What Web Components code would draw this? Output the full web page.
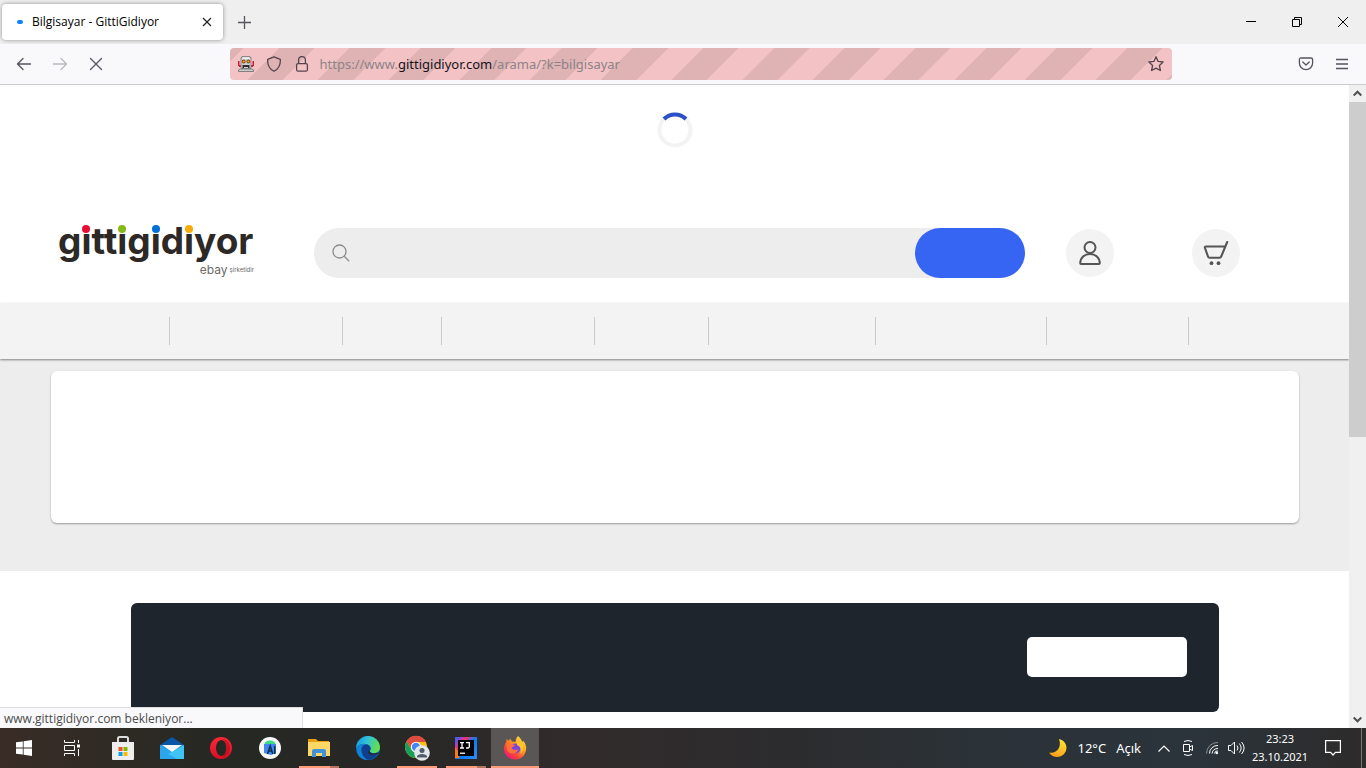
<!DOCTYPE html>
<html lang="tr">
<head>
<meta charset="utf-8">
<title>Bilgisayar - GittiGidiyor</title>
<style>
html, body { margin: 0; height: 100%; }
body { font: 12px/16px "Open Sans", "Noto Sans", sans-serif; overflow: hidden; background: #fff; }
</style>
</head>
<body>
<desktop-screen></desktop-screen>

<script>
const define = (name, html) => {
  const template = document.createElement('template');
  template.innerHTML = `<style>*{box-sizing:border-box}button{border:0;padding:0;margin:0;background:none;color:inherit;font:inherit;display:flex;align-items:center;justify-content:center}svg{display:block;flex:none}</style>` + html;
  customElements.define(name, class extends HTMLElement {
    constructor() {
      super();
      this.attachShadow({ mode: 'open' }).append(template.content.cloneNode(true));
    }
  });
};

define('desktop-screen', `
<style>
:host { display: flex; flex-direction: column; height: 100vh; }
page-viewport { flex: 1; min-height: 0; }
</style>
<tab-strip></tab-strip>
<nav-toolbar></nav-toolbar>
<page-viewport>
  <shop-header></shop-header>
  <category-bar></category-bar>
  <result-panel></result-panel>
  <promo-banner></promo-banner>
</page-viewport>
<task-bar></task-bar>
`);

define('tab-strip', `
<style>
:host { display: flex; height: 44px; background: #efefef; color: #15141a; }
.tab { display: flex; align-items: center; width: 221px; margin: 4px 0 4px 2px; padding: 0 4px 0 14px; background: #fff; border-radius: 4px; box-shadow: 0 0 4px rgba(0,0,0,.4); }
.tab span { flex: 1; margin-left: 8px; white-space: nowrap; font: 12px/16px "Open Sans", sans-serif; color: #000; }
.tab button { width: 24px; height: 24px; }
.new { width: 42px; }
.window { margin-left: auto; display: flex; }
.window button { width: 46px; }
</style>
<div class="tab">
  <svg width="8" height="6" viewBox="0 0 8 6"><rect x="1" y="1" width="6" height="4" rx="2" fill="#0a84ff"/></svg>
  <span>Bilgisayar - GittiGidiyor</span>
  <button aria-label="Sekmeyi kapat"><svg width="10" height="10" fill="none" stroke="#222"><path d="M1 1l8 8M9 1L1 9" stroke-width="1.2"/></svg></button>
</div>
<button class="new" aria-label="Yeni sekme"><svg width="13" height="13" stroke="#55535e"><path d="M6.5 0v13M0 6.5h13" stroke-width="1.3"/></svg></button>
<div class="window">
  <button aria-label="Simge durumuna küçült"><svg width="10" height="10" stroke="#000"><path d="M0 4.500h10"/></svg></button>
  <button aria-label="Önceki boyut"><svg width="10" height="10" fill="none" stroke="#000"><path d="M.5 2.5h7v7h-7zM2.5 2.500v-2h7v7h-2"/></svg></button>
  <button aria-label="Kapat"><svg width="10" height="10" stroke="#000"><path d="M0 0l10 10M10 0L0 10"/></svg></button>
</div>
`);

define('nav-toolbar', `
<style>
:host { display: flex; align-items: center; height: 41px; padding: 0 6px; background: #f9f9fb; border-bottom: 1px solid #ccc; color: #55535e; }
button { width: 36px; height: 32px; }
.side { flex: 1 1 0; display: flex; }
.side.end { justify-content: flex-end; flex-grow: .84; }
.address { flex: 4.2 1 0; display: flex; align-items: center; height: 32px; padding: 0 2px; border-radius: 4px;
  background: repeating-linear-gradient(-45deg, #dfb2b4 0 4px, #f3c2c5 4px 29px, #dfb2b4 29px 50px); }
.address button { width: 28px; }
.url { flex: 1; margin-left: 4px; outline: 0; white-space: nowrap; font: 13px/20px "Noto Sans", sans-serif; color: #8d8386; }
.url b { font-weight: 400; color: #15141a; }
</style>
<div class="side">
  <button aria-label="Geri"><svg width="16" height="16" fill="none" stroke="#55535e" stroke-width="1.3" stroke-linecap="round" stroke-linejoin="round"><path d="M14.500 8H1.500M7 2.500L1.500 8 7 13.500"/></svg></button>
  <button aria-label="İleri"><svg width="16" height="16" fill="none" stroke="#b9b8bd" stroke-width="1.3" stroke-linecap="round" stroke-linejoin="round"><path d="M1.500 8h13M9 2.500L14.500 8 9 13.500"/></svg></button>
  <button aria-label="Durdur"><svg width="16" height="16" fill="none" stroke="#55535e" stroke-width="1.3" stroke-linecap="round"><path d="M2.500 2.500l11 11M13.500 2.500l-11 11"/></svg></button>
</div>
<div class="address">
  <button aria-label="Uzaktan denetim"><svg width="16" height="16"><path d="M0 5h1v4h2v2H1V9H0zM16 5h-1v4h-2v2h2V9h1z" fill="#d01e38"/><path d="M0 5h1.500v5H0zM14.500 5H16v5h-1.500z" fill="#d01e38"/><path d="M4 .5h8v1h1v11H3v-11h1z" fill="#cfcfcf" stroke="#777" stroke-width=".8"/><path d="M4.500 1.500h7v1.500h-7z" fill="#f2f2f2"/><circle cx="5.700" cy="5.500" r="1.900" fill="#7a4a20"/><circle cx="10.300" cy="5.500" r="1.900" fill="#7a4a20"/><circle cx="5.700" cy="5.500" r="1.100" fill="#ff9d1e"/><circle cx="10.300" cy="5.500" r="1.100" fill="#ff9d1e"/><path d="M4.500 9h7v3h-1.500v-1h-4v1H4.500z" fill="#2e2e2e"/><path d="M.5 15.500v-1.500l2-1h11l2 1v1.500z" fill="#ccc" stroke="#6b6b6b" stroke-width=".8"/></svg></button>
  <button aria-label="İzlenme koruması"><svg width="16" height="16" fill="none" stroke="#55444c" stroke-width="1.3" stroke-linejoin="round"><path d="M8 .8L14.300 3.300c.4 5.200-1.600 9.500-6.300 12C3.300 12.800 1.300 8.500 1.700 3.300z"/></svg></button>
  <button aria-label="Site bilgisi"><svg width="16" height="16" fill="none" stroke="#55444c" stroke-width="1.3"><rect x="2.600" y="7.600" width="10.800" height="7.600" rx="1.500"/><path d="M4.600 7.500V4a3.400 3.400 0 0 1 6.800 0v3.500"/></svg></button>
  <div class="url" role="textbox" contenteditable="true" spellcheck="false" aria-label="Adres">https://www.<b>gittigidiyor.com</b>/arama/?k=bilgisayar</div>
  <button aria-label="Yer imi"><svg width="16" height="16" fill="none" stroke="#55444c" stroke-width="1.3" stroke-linejoin="round"><path d="M8 .8l2.100 4.600 5 .6-3.700 3.500 1 5L8 12.100l-4.400 2.400 1-5L.9 6l5-.6z"/></svg></button>
</div>
<div class="side end">
  <button aria-label="Pocket"><svg width="16" height="16" fill="none" stroke="#55535e" stroke-width="1.300" stroke-linecap="round" stroke-linejoin="round"><path d="M3 2h10q1.600 0 1.600 1.600V7a6.600 6.600 0 0 1-13.200 0V3.600Q1.400 2 3 2z"/><path d="M4.800 6L8 9l3.200-3"/></svg></button>
  <button aria-label="Menü"><svg width="14" height="12" stroke="#55535e" stroke-width="1.3"><path d="M1 1.500h12M1 6h12M1 10.500h12"/></svg></button>
</div>
`);

define('page-viewport', `
<style>
:host { display: flex; position: relative; background: #fff; }
.page { flex: 1; min-width: 0; overflow: hidden; }
.bar { width: 17px; display: flex; flex-direction: column; background: #f0f0f0; }
.bar button { height: 17px; }
.track { flex: 1; }
.thumb { height: 55%; background: #cdcdcd; }
.status { position: absolute; left: 0; bottom: 0; width: 303px; height: 21px; padding: 2px 4px; background: #f9f9fb; border: 1px solid #ddd; border-width: 1px 1px 0 0; color: #4c4c4c; font: 12px/18px "Open Sans", sans-serif; white-space: nowrap; }
</style>
<div class="page"><slot></slot></div>
<div class="bar">
  <button aria-label="Yukarı"><svg width="9" height="7" fill="none" stroke="#505050" stroke-width="2"><path d="M.7 5.500L4.500 1.700l3.800 3.800"/></svg></button>
  <div class="track"><div class="thumb"></div></div>
  <button aria-label="Aşağı"><svg width="9" height="7" fill="none" stroke="#505050" stroke-width="2"><path d="M.7 1.500l3.800 3.800 3.800-3.800"/></svg></button>
</div>
<div class="status" role="status">www.gittigidiyor.com bekleniyor...</div>
`);

define('shop-header', `
<style>
:host { display: block; padding-top: 27px; }
.spinner { display: block; margin: 0 auto; }
.row { display: flex; align-items: center; height: 50px; margin: 80px 109px 25px 58px; }
.search { flex: 1; display: flex; align-items: center; height: 50px; margin: 0 41px 0 60px; padding-left: 18px; border-radius: 25px; background: #ededed; }
.search input { flex: 1; min-width: 0; height: 100%; margin-left: 8px; padding: 0; border: 0; outline: 0; background: none; font: inherit; }
.search button { width: 110px; height: 50px; border-radius: 25px; background: #3665f3; }
.round { width: 48px; height: 48px; border-radius: 50%; background: #f3f3f3; }
.cart { margin-left: 78px; }
</style>
<svg class="spinner" width="36" height="36" fill="none" stroke-width="4"><circle cx="18" cy="18" r="15.500" stroke="#f3f3f3"/><path d="M7 7a15.500 15.500 0 0 1 22 0" stroke="#2b50c8"/></svg>
<div class="row">
  <brand-logo></brand-logo>
  <form class="search" onsubmit="return false">
    <svg width="18" height="18" fill="none" stroke="#8b8b8b" stroke-width="1.300"><circle cx="7.500" cy="7.500" r="6.500"/><path d="M12.200 12.200l5 5"/></svg>
    <input type="text" aria-label="Ara">
    <button aria-label="Bul"></button>
  </form>
  <button class="round" aria-label="Hesabım"><svg width="24" height="26" fill="none" stroke="#555" stroke-width="2" stroke-linejoin="round"><circle cx="12" cy="7.500" r="5.500"/><path d="M3 24c-.6 0-.8-.4-.8-1C2.400 17.500 6.500 14 12 14s9.600 3.500 9.800 9c0 .6-.2 1-.8 1z"/></svg></button>
  <button class="round cart" aria-label="Sepetim"><svg width="26" height="26" fill="none" stroke="#555" stroke-width="2.100" stroke-linecap="round" stroke-linejoin="round"><path d="M22 6.500H3c-1 0-1.300.6-1 1.500l3 8.500c.3.900.6 1.200 1.500 1.200h10.200c.9 0 1.200-.3 1.500-1.200L24.200 2"/><circle cx="8.500" cy="23.200" r="1.900" fill="#555" stroke="none"/><circle cx="15.500" cy="23.200" r="1.900" fill="#555" stroke="none"/></svg></button>
</div>
`);

define('brand-logo', `
<style>
:host { display: block; width: 196px; color: #2d2926; }
a { display: block; padding-bottom: 4px; color: inherit; text-decoration: none; white-space: nowrap; }
.name { font: 700 37px/28px "Inter", sans-serif; }
i { position: relative; font-style: normal; }
i::before { content: ""; position: absolute; left: 50%; top: 7px; width: 8px; height: 8px; margin-left: -4px; border-radius: 50%; background: var(--dot); }
.by { display: flex; justify-content: flex-end; align-items: center; gap: 2px; margin-top: 9px; color: #6c6967; font: 6px/12px "Inter", sans-serif; }
.by span:first-child { font-size: 12px; }
</style>
<a href="#" aria-label="gittigidiyor">
  <div class="name">g<i style="--dot:#e60f35">i</i>tt<i style="--dot:#86b817">i</i>g<i style="--dot:#0070d8">i</i>d<i style="--dot:#f9ab0b">i</i>yor</div>
  <div class="by"><span>ebay</span><span>şirketidir</span></div>
</a>
`);

define('category-bar', `
<style>
:host { display: block; position: relative; background: #f3f3f3; box-shadow: 0 1px 2px rgba(0,0,0,.45); }
nav { display: flex; align-items: center; height: 56px; }
span { flex: var(--w) 1 0; height: 28px; }
span:not(:last-child) { border-right: 1px solid #c9c9c9; }
</style>
<nav aria-label="Kategoriler">
  <span style="--w:170"></span><span style="--w:173"></span><span style="--w:99"></span><span style="--w:153"></span><span style="--w:113"></span><span style="--w:167"></span><span style="--w:171"></span><span style="--w:142"></span><span style="--w:161"></span>
</nav>
`);

define('result-panel', `
<style>
:host { display: block; padding: 12px 50px 48px 51px; background: #ededed; }
section { height: 152px; border-radius: 6px; background: #fff; box-shadow: 0 1px 2px rgba(0,0,0,.35); }
</style>
<section></section>
`);

define('promo-banner', `
<style>
:host { display: block; padding: 32px 130px 32px 131px; background: #fff; }
section { display: flex; justify-content: flex-end; height: 109px; padding: 34px 32px 0 0; border-radius: 6px; background: #1e252c; }
button { width: 160px; height: 40px; border-radius: 5px; background: #fff; }
</style>
<section><button aria-label="Bildirim"></button></section>
`);

define('task-button', `
<style>
:host { display: block; position: relative; width: 48px; height: 40px; }
button { width: 100%; height: 100%; }
:host([active]) button { background: #5a5655; }
:host([running])::after, :host([active])::after { content: ""; position: absolute; left: 4px; right: 4px; bottom: 0; height: 2px; background: #ff9b78; }
:host([active])::after { left: 0; right: 0; }
:host([stacked])::after { background: linear-gradient(90deg, #ff9b78 31px, #b5755f 31px); }
</style>
<button><slot></slot></button>
`);

define('task-bar', `
<style>
:host { display: flex; height: 40px; color: #fff; background: linear-gradient(90deg, #392d26 0, #262823 16%, #282826 30%, #322b2b 42%, #2c2c2e 58%, #2b3238 72%, #2b343b 88%, #2d2b2a 100%); }
.apps { display: flex; gap: 1px; }
.apps task-button:nth-child(2) { margin: 0 2px 0 -1px; }
.tray { margin-left: auto; display: flex; align-items: center; }
.weather { width: auto; gap: 10px; margin-right: 11px; font: 13px/18px "Noto Sans", sans-serif; }
.small { width: 24px; height: 40px; }
.clock { width: 64px; display: block; text-align: center; font: 11px/18px "Noto Sans", sans-serif; white-space: nowrap; }
.notice { width: 42px; height: 40px; margin-right: 7px; }
.desk { width: 5px; height: 40px; border-left: 1px solid #777; }
</style>
<div class="apps">
  <task-button title="Başlat"><svg width="16" height="16" fill="#fff"><path d="M0 2.300L6.800 1.400v6.200H0zM7.600 1.300L16 0v7.600H7.600zM0 8.400h6.800v6.200L0 13.700zM7.600 8.400H16V16l-8.400-1.300z"/></svg></task-button>
  <task-button title="Görev görünümü"><svg width="18" height="16" fill="none" stroke="#fff"><path d="M1.500 0v2.500h10V0M1.500 5.500h10v5h-10zM1.500 16v-2.500h10V16M15.500 0v3M15.500 9v7"/><path d="M14 4.500h3v3h-3z" fill="#fff" stroke="none"/></svg></task-button>
  <task-button title="Store"><svg width="24" height="26"><path d="M7 8V3.500Q7 2 8.500 2h7Q17 2 17 3.500V8" fill="none" stroke="#ddd" stroke-width="2"/><path d="M1 7h22v17q0 1-1 1H2q-1 0-1-1z" fill="#eee"/><path d="M7.500 12h4v4h-4z" fill="#f25022"/><path d="M12.500 12h4v4h-4z" fill="#7fba00"/><path d="M7.500 17h4v4h-4z" fill="#00a4ef"/><path d="M12.500 17h4v4h-4z" fill="#ffb900"/></svg></task-button>
  <task-button title="Posta"><svg width="24" height="24"><path d="M0 9L12 1l12 8z" fill="#0a55a8"/><path d="M0 9h24v14H0z" fill="#1b8ede"/><path d="M0 9l24 14H0z" fill="#2ba5ec"/><path d="M24 9L8 18l9 5h7z" fill="#3fc4f4"/><path d="M2 9h20l-10 7z" fill="#f5f5f5"/></svg></task-button>
  <task-button title="Opera"><svg width="24" height="24"><defs><linearGradient id="o" x2="0" y2="1"><stop stop-color="#ff2638"/><stop offset="1" stop-color="#d80f24"/></linearGradient></defs><path fill-rule="evenodd" d="M12 1a11 11 0 1 0 0 22 11 11 0 0 0 0-22zM12.500 4c3 0 4.700 3.600 4.700 8s-1.700 8-4.700 8-5.500-3.600-5.500-8 2.500-8 5.500-8z" fill="url(#o)"/><path d="M13 3c5 0 8 4 8 9s-3 9-8 9c3-1 4.200-4.600 4.200-9S16 4 13 3z" fill="#a80c1c" opacity=".5"/></svg></task-button>
  <task-button title="Android Studio"><svg width="22" height="22"><circle cx="11" cy="11" r="11" fill="#f7f7f7"/><path d="M5.500 7a5.500 3.500 0 0 1 11 0z" fill="#3ddc84"/><path d="M5 7h12v9l-5 2-7-2z" fill="#4285f4"/><path d="M8.500 17l2.700-8 2.600 8M9.500 14h3.600M15.800 9v8" fill="none" stroke="#0b3042" stroke-width="1.500"/></svg></task-button>
  <task-button title="Dosya Gezgini" running stacked><svg width="22" height="20"><path d="M0 1h8l2 2h11v4H0z" fill="#e5a20d"/><path d="M0 4h22v14H0z" fill="#ffd766"/><path d="M4 19v-6q0-2 2-2h10q2 0 2 2v6h-4v-4H8v4z" fill="#3f93db"/></svg></task-button>
  <task-button title="Edge"><svg width="24" height="24"><defs><linearGradient id="e" x1="0" x2="1" y2=".3"><stop stop-color="#1690d8"/><stop offset=".5" stop-color="#31c3d8"/><stop offset="1" stop-color="#62df52"/></linearGradient></defs><circle cx="12" cy="12" r="12" fill="#0a72c5"/><path d="M.2 10A12 12 0 0 1 24 11c.2 4-2.800 6-6 6-3 0-5-1-4-2.500C16 10.500 12 8 8 8c-4 0-7 2-7.800 4z" fill="url(#e)"/><path d="M8 8c5-.5 8 3.500 6 6.500-1 1.500 1 2.700 4 2.700 2 0 4-.7 4.500-1-2 5-7 8-12 7.700C5 22 1 14 8 8z" fill="#103f8e"/><path d="M1 11c2-3 7-4 10-2.500-4-.5-6 3-5.500 6.500.5 4 3 7.500 6.500 9C4 24 0 18 1 11z" fill="#1182d5"/><path d="M14 14.500c-1 2 1 3.200 4 3.200 2 0 4-.8 4.700-1.500l-.7 1.500c-4 2-10 1.300-10-1.700z" fill="#282826"/></svg></task-button>
  <task-button title="Chrome" running><svg width="26" height="26"><circle cx="12" cy="12" r="11" fill="#fbc116"/><path d="M2.500 6.500A11 11 0 0 1 22 7H12a5 5 0 0 0-4.600 7z" fill="#de4b40"/><path d="M2.500 6.500l5 8a5 5 0 0 0 6.500 2L11 23A11 11 0 0 1 2.500 6.500z" fill="#1b9e58"/><circle cx="12" cy="12" r="5.200" fill="#fff"/><circle cx="12" cy="12" r="4.200" fill="#4285f4"/><circle cx="18" cy="18" r="7.800" fill="#e3e6ea"/><circle cx="18" cy="15.500" r="2.500" fill="#4e5b6c"/><path d="M13 22.500v-1c0-3.500 10-3.500 10 0v1z" fill="#4e5b6c"/></svg></task-button>
  <task-button title="IntelliJ IDEA" running stacked><svg width="22" height="22"><defs><linearGradient id="j" x2="1" y2=".8"><stop stop-color="#1b6fe8"/><stop offset=".2" stop-color="#9a43d8"/><stop offset=".3" stop-color="#fe315d"/><stop offset=".6" stop-color="#087cfa"/><stop offset="1" stop-color="#2d87f5"/></linearGradient></defs><path d="M0 0h22v22H0z" fill="url(#j)"/><path d="M0 10l4 6v5H0z" fill="#f97a12"/><path d="M3 3h16v16H3z" fill="#050507"/><path d="M5 5.700h4M7 5.700V11M5 11h4M11 5.700h3.300v4q0 1.500-3.300 1.300" fill="none" stroke="#fff" stroke-width="1.300"/><path d="M5 15.500h5V17H5z" fill="#ddd"/></svg></task-button>
  <task-button title="Firefox" active><svg width="24" height="24"><defs><linearGradient id="f" x1="1" x2=".2" y2="1"><stop stop-color="#fff44f"/><stop offset=".4" stop-color="#ffa821"/><stop offset=".75" stop-color="#ff4038"/><stop offset="1" stop-color="#e31587"/></linearGradient></defs><path d="M15 0c2 1.500 3.200 3.200 3.800 5l1.400 1-.2-1.500C23 8 24 12 22.500 16 20.800 20.800 17 23.500 12 23.500 5.500 23.500 1 18.500 1 13c0-3 1-5.500 2.500-7.500V3L6 5l1-2.500 2 3L12.500 6c.3-2.300.5-4 2.500-6z" fill="url(#f)"/><circle cx="12.500" cy="12.500" r="5" fill="#7a45e0"/><path d="M4 8c3-1 5 .5 8 1-1 1.800-2.500 1.800-3.500 2.300C9 14 13 15 15 13c-.5 5-7 6-10 2.500C3.500 13.500 3 10 4 8z" fill="#ff7139"/><path d="M14 5c4 0 6 3 6.300 6 .3 3-1 5.500-3 7 1.500-4 .5-7.500-3.300-9z" fill="#ffc62b"/></svg></task-button>
</div>
<div class="tray">
  <button class="weather"><svg width="20" height="20"><defs><linearGradient id="m" x1="1" x2=".5" y2="1"><stop stop-color="#ffeb38"/><stop offset="1" stop-color="#f9a11b"/></linearGradient></defs><path d="M11 1c4.500 1 7.500 4.500 7.500 9a9 9 0 0 1-9 9C6 19 3 17.500 1 14.500 9 16 14 9 11 1z" fill="url(#m)"/></svg><span>12°C</span><span>Açık</span></button>
  <button class="small" aria-label="Gizli simgeler"><svg width="12" height="7" fill="none" stroke="#fff" stroke-width="1.200"><path d="M.5 6.500L6 1l5.500 5.500"/></svg></button>
  <button class="small" aria-label="Kamera"><svg width="12" height="16" fill="none" stroke="#fff"><path d="M1.500 4.500h6v7h-6zM7.500 7l3-1.500v5L7.500 9M2 1.500Q6-.5 10 1.500M2 14.500q4 2 8 0"/></svg></button>
  <button class="small" aria-label="Kablosuz ağ"><svg width="14" height="14" fill="none" stroke="#fff"><path d="M1.500 12.500A11 11 0 0 1 13 1.500" stroke="#8c9195"/><path d="M4.500 12.500A8 8 0 0 1 13 4.500M7 12.500A6 6 0 0 1 13 7.500M9.500 12.500a3 3 0 0 1 3.500-2.500"/><circle cx="11.800" cy="12" r="1.300" fill="#fff" stroke="none"/></svg></button>
  <button class="small" aria-label="Ses"><svg width="17" height="14" fill="none" stroke="#fff"><path d="M.5 4.500H3l3.500-3.500v12L3 9.500H.5zM9 4.500q2 2.500 0 5M11.300 2.500q3.700 4.500 0 9M13.600 1q5 6 0 12"/></svg></button>
  <button class="clock">23:23<br>23.10.2021</button>
  <button class="notice" aria-label="Bildirimler"><svg width="16" height="16" fill="none" stroke="#fff" stroke-width="1.200"><path d="M.6.6h14.800v11.800h-5L8 15l-2.400-2.600h-5z"/></svg></button>
  <div class="desk"></div>
</div>
`);
</script>
</body>
</html>
